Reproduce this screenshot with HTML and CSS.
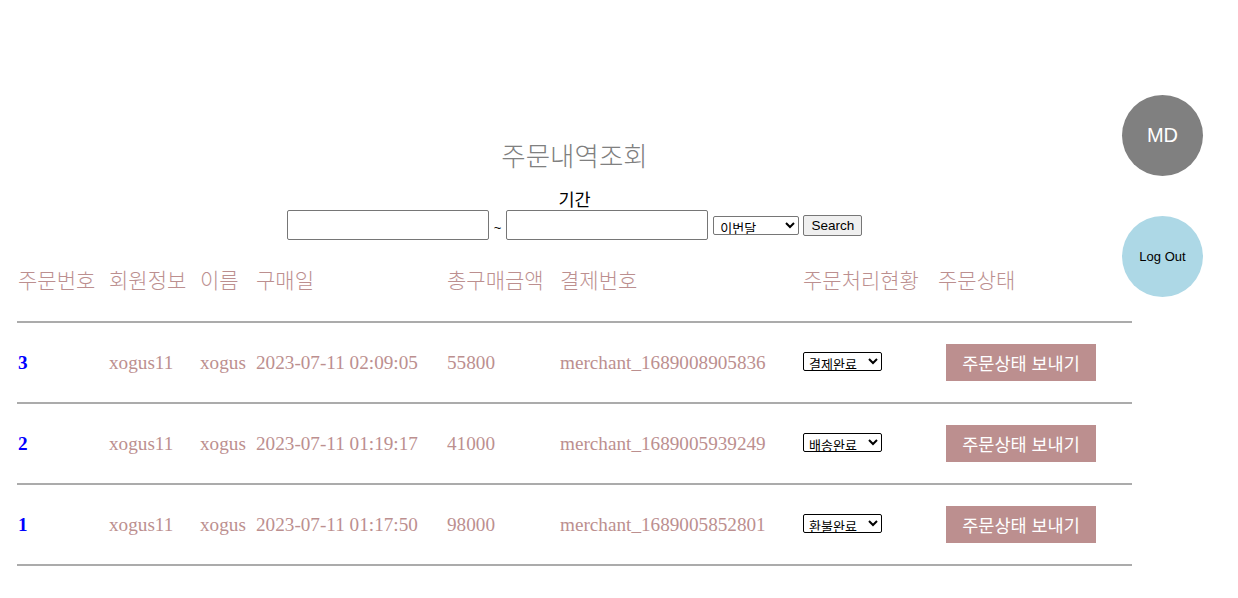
FILE: index.html
```html
<!DOCTYPE html>
<html lang="ko">
<head>
<meta charset="utf-8">
<title>주문내역조회</title>
<link rel="stylesheet" href="styles.css">
</head>
<body>
<main class="page">
  <h1 class="title">주문내역조회</h1>
  <div class="period-label">기간</div>
  <form class="search">
    <input class="date-input" type="text">
    <span class="tilde">~</span>
    <input class="date-input" type="text">
    <select class="range-select"><option>이번달</option></select>
    <button type="button" class="search-btn">Search</button>
  </form>
  <div class="orders">
    <div class="row head">
      <div>주문번호</div><div>회원정보</div><div>이름</div><div>구매일</div><div>총구매금액</div><div>결제번호</div><div>주문처리현황</div><div>주문상태</div>
    </div>
    <div class="row">
      <div class="num">3</div><div>xogus11</div><div>xogus</div><div>2023-07-11 02:09:05</div><div>55800</div><div>merchant_1689008905836</div>
      <div><select class="status"><option>결제완료</option></select></div>
      <div><button type="button" class="send">주문상태 보내기</button></div>
    </div>
    <div class="row">
      <div class="num">2</div><div>xogus11</div><div>xogus</div><div>2023-07-11 01:19:17</div><div>41000</div><div>merchant_1689005939249</div>
      <div><select class="status"><option>배송완료</option></select></div>
      <div><button type="button" class="send">주문상태 보내기</button></div>
    </div>
    <div class="row">
      <div class="num">1</div><div>xogus11</div><div>xogus</div><div>2023-07-11 01:17:50</div><div>98000</div><div>merchant_1689005852801</div>
      <div><select class="status"><option>환불완료</option></select></div>
      <div><button type="button" class="send">주문상태 보내기</button></div>
    </div>
  </div>
</main>
<nav class="side">
  <div class="circle md">MD</div>
  <div class="circle logout">Log Out</div>
</nav>
</body>
</html>
```

FILE: styles.css
```css
html, body {
  margin: 0;
  padding: 0;
  background: #fff;
}
body {
  font-family: "Liberation Serif", "Noto Sans CJK KR", serif;
  position: relative;
  width: 1238px;
  height: 598px;
  overflow: hidden;
}
.page {
  width: 1115px;
  margin-left: 17px;
  padding-top: 138px;
  display: flex;
  flex-direction: column;
  align-items: center;
}
.title {
  margin: 0;
  height: 34px;
  line-height: 34px;
  font-size: 26.5px;
  color: #808080;
  font-family: "Noto Sans CJK KR", sans-serif;
  font-weight: 300;
}
.period-label {
  margin-top: 16px;
  height: 22px;
  line-height: 22px;
  font-size: 17.5px;
  font-weight: 400;
  font-family: "Noto Sans CJK KR", sans-serif;
  color: #000;
}
.search {
  display: flex;
  align-items: center;
  height: 30px;
  margin: 0;
}
.date-input {
  width: 202px;
  height: 30px;
  box-sizing: border-box;
  border: 1px solid #767676;
  border-radius: 2px;
  padding: 1px 2px;
  margin: 0;
  font-size: 13px;
}
.tilde {
  font-family: "Liberation Sans", sans-serif;
  font-size: 13px;
  margin: 4px 5px 0;
}
.range-select {
  margin-left: 5px;
  width: 86px;
  height: 19px;
  font-size: 13px;
  line-height: 17px;
  font-family: "Noto Sans CJK KR", sans-serif;
  border: 1px solid #767676;
  border-radius: 2px;
  padding: 0 0 0 2px;
  background: #fff;
  color: #000;
}
.search-btn {
  margin-left: 4px;
  width: 59px;
  height: 21px;
  font-family: "Liberation Sans", sans-serif;
  font-size: 13.5px;
  padding: 0;
  border: 1px solid #767676;
  border-radius: 2px;
  background: #efefef;
  color: #000;
}
.orders {
  align-self: stretch;
}
.row {
  display: grid;
  grid-template-columns: 91px 91px 56px 191px 113px 243px 135px 195px;
  align-items: center;
  height: 81px;
  box-sizing: border-box;
  border-bottom: 2px solid #ababab;
  color: #bc8f8f;
  font-size: 19.2px;
}
.row.head {
  height: 83px;
  font-family: "Noto Sans CJK KR", sans-serif;
  font-weight: 300;
  font-size: 21px;
}
.row > div {
  padding-left: 1px;
  white-space: nowrap;
}
.row.head > div {
  padding-bottom: 3px;
}
.num {
  color: #0000ff;
  font-weight: bold;
}
.status {
  width: 79px;
  height: 19px;
  font-size: 13px;
  line-height: 17px;
  font-family: "Noto Sans CJK KR", sans-serif;
  border: 1px solid #000;
  border-radius: 2px;
  padding: 0 0 0 1px;
  background: #fff;
  color: #000;
}
.send {
  margin-left: 8px;
  width: 150px;
  height: 37px;
  border: none;
  background: #bc8f8f;
  color: #fff;
  font-family: "Noto Sans CJK KR", sans-serif;
  font-size: 17.5px;
  padding: 0;
}
.side {
  position: absolute;
  top: 95px;
  left: 1122px;
  display: flex;
  flex-direction: column;
  gap: 40px;
}
.circle {
  width: 81px;
  height: 81px;
  border-radius: 50%;
  display: flex;
  align-items: center;
  justify-content: center;
  font-family: "Liberation Sans", sans-serif;
}
.md {
  background: #808080;
  color: #fff;
  font-size: 20px;
}
.logout {
  background: #add8e6;
  color: #000;
  font-size: 13px;
}
```
